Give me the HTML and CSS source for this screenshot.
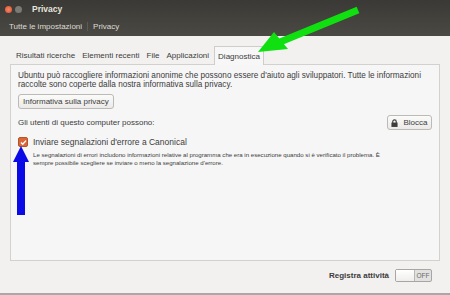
FILE: index.html
```html
<!DOCTYPE html>
<html lang="it">
<head>
    <meta charset="UTF-8">
    <title>Privacy</title>
    <link rel="stylesheet" href="styles.css">
</head>
<body>
    <div class="window">
        <div class="titlebar">
            <div class="title-row">
                <span class="dot close"></span>
                <span class="dot mini"></span>
                <span class="title">Privacy</span>
            </div>
            <div class="crumbs">
                <span class="crumb">Tutte le impostazioni</span>
                <span class="crumb">Privacy</span>
            </div>
        </div>

        <div class="content">
            <div class="tabs">
                <span class="tab">Risultati ricerche</span>
                <span class="tab">Elementi recenti</span>
                <span class="tab">File</span>
                <span class="tab">Applicazioni</span>
                <span class="tab active">Diagnostica</span>
            </div>
            <div class="panel">
                <p class="intro">Ubuntu può raccogliere informazioni anonime che possono essere d'aiuto agli sviluppatori. Tutte le informazioni<br>raccolte sono coperte dalla nostra informativa sulla privacy.</p>
                <div><button class="btn">Informativa sulla privacy</button></div>
                <div class="users">
                    <span>Gli utenti di questo computer possono:</span>
                    <button class="btn lock">
                        <svg class="lock-icon" width="7" height="8" viewBox="0 0 8 9"><path d="M2 4.5V3a2 2 0 0 1 4 0v1.5" fill="none" stroke="#3c3c3c" stroke-width="1.3"/><rect x="0.5" y="4" width="7" height="5" fill="#3c3c3c"/></svg>
                        <span>Blocca</span>
                    </button>
                </div>
                <div class="check-row">
                    <span class="check">
                        <svg width="7" height="7" viewBox="0 0 7 7"><path d="M1 3.6l1.7 1.7L6 1.6" fill="none" stroke="#fff" stroke-width="1.4"/></svg>
                    </span>
                    <span>Inviare segnalazioni d'errore a Canonical</span>
                </div>
                <p class="note">Le segnalazioni di errori includono informazioni relative al programma che era in esecuzione quando si è verificato il problema. È<br>sempre possibile scegliere se inviare o meno la segnalazione d'errore.</p>
            </div>

            <div class="footer">
                <span class="footer-label">Registra attività</span>
                <span class="switch"><span class="knob"></span><span class="off">OFF</span></span>
            </div>
        </div>
    </div>

    <svg class="arrow green" width="120" height="60" viewBox="0 0 120 60">
        <path d="M108 6 L30 38" stroke="#10e010" stroke-width="7" fill="none"/>
        <polygon points="8,48 24,28 38,45" fill="#10e010"/>
    </svg>
    <svg class="arrow blue" width="20" height="72" viewBox="0 0 20 72">
        <rect x="6" y="14" width="8" height="55" fill="#0a0ae6"/>
        <polygon points="10,0 2,16 18,16" fill="#0a0ae6"/>
    </svg>
</body>
</html>
```

FILE: styles.css
```css
body{
    margin: 0;
    width: 450px;
    height: 295px;
    overflow: hidden;
    position: relative;
    font-family: "Liberation Sans", Arial, sans-serif;
    font-size: 8px;
    color: #3c3c3c;
    background-color: #f2f1f0;
}

.window{
    height: 293px;
    border-bottom: 2px solid #a9a8a6;
    display: flex;
    flex-direction: column;
}

.titlebar{
    height: 36px;
    background: linear-gradient(#3a3935, #4a4944);
    color: #dfdbd2;
    display: flex;
    flex-direction: column;
}

.title-row{
    height: 18px;
    display: flex;
    align-items: center;
    padding-left: 5px;
    gap: 3px;
}

.dot{
    width: 7px;
    height: 7px;
    border-radius: 50%;
}

.close{
    background: radial-gradient(#f5866a, #e0502a);
}

.mini{
    background: #7b7a75;
}

.title{
    margin-left: 7px;
    font-weight: bold;
    font-size: 8.5px;
    color: #e6e3dc;
}

.crumbs{
    display: flex;
    align-items: center;
    padding-left: 9px;
    gap: 5px;
    height: 16px;
}

.crumb{
    padding-right: 5px;
    border-right: 1px solid #5c5b56;
}

.crumb:last-child{
    border-right: none;
}

.content{
    flex: 1;
    padding: 9px 10px 0 10px;
    display: flex;
    flex-direction: column;
}

.tabs{
    display: flex;
    align-items: flex-end;
    padding-left: 3px;
    height: 19px;
}

.tab{
    padding: 0 3px 4px 3px;
    margin-right: 1px;
}

.tab.active{
    background-color: #f7f7f7;
    border: 1px solid #cfcdca;
    border-bottom: none;
    padding: 5px 3px 4px 3px;
    margin-bottom: -1px;
    margin-left: 1px;
    position: relative;
}

.panel{
    height: 197px;
    box-sizing: border-box;
    border: 1px solid #d3d1ce;
    background-color: #f6f6f6;
    padding: 6px 7px 0 7px;
    display: flex;
    flex-direction: column;
}

p{
    margin: 0;
}

.intro{
    line-height: 9px;
    font-size: 8.2px;
    white-space: nowrap;
}

.btn{
    font-family: inherit;
    font-size: 8px;
    color: #3c3c3c;
    background: linear-gradient(#fbfbfa, #ebeae8);
    border: 1px solid #bcbab7;
    border-radius: 3px;
    padding: 2px 4px;
    margin-top: 5px;
    height: 15px;
}

.users{
    display: flex;
    align-items: center;
    justify-content: space-between;
    margin-top: 6px;
}

.lock{
    display: flex;
    align-items: center;
    justify-content: center;
    gap: 5px;
    width: 45px;
    padding: 2px 3px;
    margin-top: 0;
}

.lock-icon{
    flex-shrink: 0;
    display: block;
}

.check-row{
    display: flex;
    align-items: center;
    gap: 5px;
    margin-top: 7px;
    font-size: 8.5px;
}

.check{
    width: 8px;
    height: 8px;
    border-radius: 2px;
    background: #d8683a;
    border: 1px solid #b5532a;
    display: flex;
    align-items: center;
    justify-content: center;
}

.note{
    font-size: 6.1px;
    line-height: 8px;
    margin-top: 4px;
    padding-left: 15px;
    white-space: nowrap;
}

.footer{
    display: flex;
    justify-content: flex-end;
    align-items: center;
    gap: 6px;
    padding: 8px 8px 0 0;
}

.footer-label{
    font-weight: bold;
}

.switch{
    width: 37px;
    height: 13px;
    box-sizing: border-box;
    border: 1px solid #a8a6a2;
    border-radius: 2px;
    background: #e2e1df;
    display: flex;
    align-items: center;
}

.knob{
    width: 18px;
    height: 11px;
    background: linear-gradient(#ffffff, #efeeec);
    border-right: 1px solid #b9b7b3;
}

.off{
    flex: 1;
    text-align: center;
    font-size: 6.5px;
    color: #6a6a6a;
}

.arrow{
    position: absolute;
}

.green{
    left: 250px;
    top: 4px;
}

.blue{
    left: 11px;
    top: 146px;
}
```
